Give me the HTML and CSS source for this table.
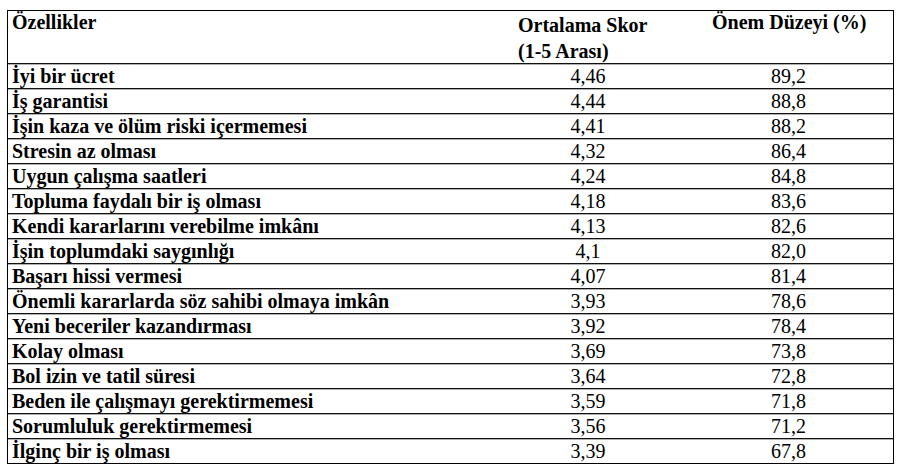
FILE: index.html
```html
<!DOCTYPE html>
<html lang="tr">
<head>
<meta charset="utf-8">
<title>Tablo</title>
<link rel="stylesheet" href="styles.css">
</head>
<body class="page">
<div class="tbl">
  <div class="tr hd">
    <div class="name">Özellikler</div>
    <div class="score">Ortalama Skor<br>(1-5 Arası)</div>
    <div class="imp">Önem Düzeyi (%)</div>
  </div>
  <div class="tr"><div class="name">İyi bir ücret</div><div class="score">4,46</div><div class="imp">89,2</div></div>
  <div class="tr"><div class="name">İş garantisi</div><div class="score">4,44</div><div class="imp">88,8</div></div>
  <div class="tr"><div class="name">İşin kaza ve ölüm riski içermemesi</div><div class="score">4,41</div><div class="imp">88,2</div></div>
  <div class="tr"><div class="name">Stresin az olması</div><div class="score">4,32</div><div class="imp">86,4</div></div>
  <div class="tr"><div class="name">Uygun çalışma saatleri</div><div class="score">4,24</div><div class="imp">84,8</div></div>
  <div class="tr"><div class="name">Topluma faydalı bir iş olması</div><div class="score">4,18</div><div class="imp">83,6</div></div>
  <div class="tr"><div class="name">Kendi kararlarını verebilme imkânı</div><div class="score">4,13</div><div class="imp">82,6</div></div>
  <div class="tr"><div class="name">İşin toplumdaki saygınlığı</div><div class="score">4,1</div><div class="imp">82,0</div></div>
  <div class="tr"><div class="name">Başarı hissi vermesi</div><div class="score">4,07</div><div class="imp">81,4</div></div>
  <div class="tr"><div class="name">Önemli kararlarda söz sahibi olmaya imkân</div><div class="score">3,93</div><div class="imp">78,6</div></div>
  <div class="tr"><div class="name">Yeni beceriler kazandırması</div><div class="score">3,92</div><div class="imp">78,4</div></div>
  <div class="tr"><div class="name">Kolay olması</div><div class="score">3,69</div><div class="imp">73,8</div></div>
  <div class="tr"><div class="name">Bol izin ve tatil süresi</div><div class="score">3,64</div><div class="imp">72,8</div></div>
  <div class="tr"><div class="name">Beden ile çalışmayı gerektirmemesi</div><div class="score">3,59</div><div class="imp">71,8</div></div>
  <div class="tr"><div class="name">Sorumluluk gerektirmemesi</div><div class="score">3,56</div><div class="imp">71,2</div></div>
  <div class="tr"><div class="name">İlginç bir iş olması</div><div class="score">3,39</div><div class="imp">67,8</div></div>
</div>
</body>
</html>
```
FILE: styles.css
```css
.page {
  margin: 0;
  padding: 0;
  background: #fff;
  color: #000;
  font-family: "Liberation Serif", serif;
  font-size: 20px;
}
.tbl {
  margin: 10px 0 0 7px;
  width: 885px;
  border: 1px solid #000;
  font-family: "Liberation Serif", serif;
  font-size: 20px;
}
.tr {
  display: grid;
  grid-template-columns: 506px 148px 1fr;
  height: 24px;
  border-top: 1px solid #111;
  box-shadow: inset 0 1px 0 #b0b0b0;
}
.hd {
  height: 52px;
  border-top: none;
  box-shadow: none;
}
.name {
  font-family: "Liberation Serif", serif;
  padding-left: 4px;
  font-weight: bold;
  font-size: 20px;
  line-height: 24px;
  white-space: nowrap;
}
.score, .imp {
  font-family: "Liberation Serif", serif;
  font-size: 20px;
  line-height: 24px;
  text-align: center;
}
.imp {
  padding-left: 22px;
}
.hd .name {
  line-height: 22px;
}
.hd .score {
  text-align: left;
  padding-left: 4px;
  padding-top: 1px;
  font-weight: bold;
  line-height: 26px;
  white-space: nowrap;
}
.hd .imp {
  text-align: left;
  padding-left: 50px;
  font-weight: bold;
  line-height: 22px;
  white-space: nowrap;
}
```
